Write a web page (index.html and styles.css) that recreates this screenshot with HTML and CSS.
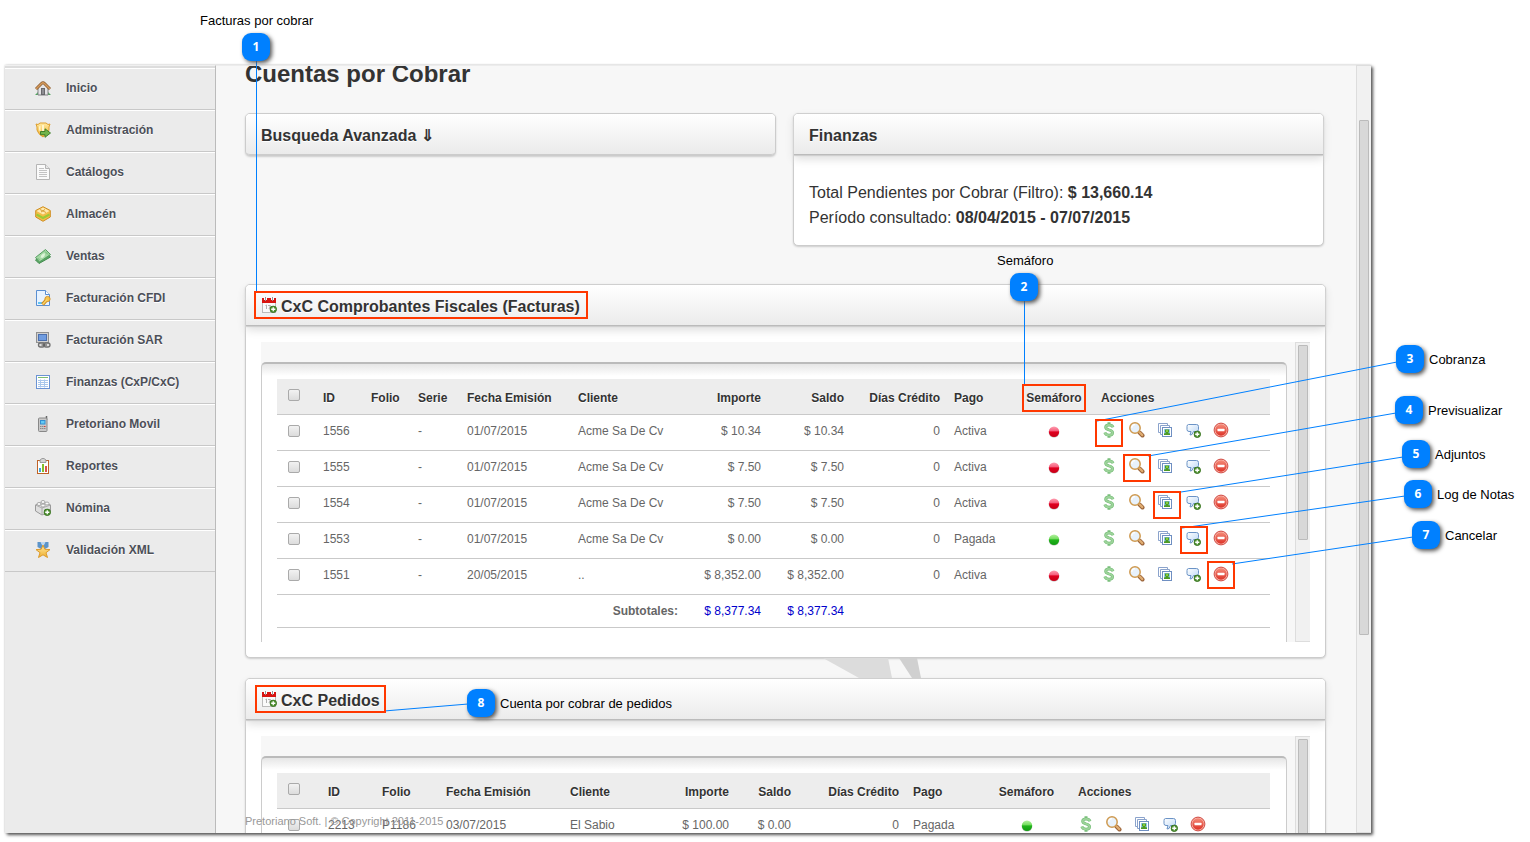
FILE: index.html
```html
<!DOCTYPE html>
<html lang="es">
<head>
<meta charset="utf-8">
<title>Cuentas por Cobrar</title>
<link rel="stylesheet" href="styles.css">
</head>
<body>
<svg class="sprite" aria-hidden="true">
  <defs>
    <linearGradient id="g-gold" x1="0" y1="0" x2="0" y2="1"><stop offset="0" stop-color="#ffe9a0"/><stop offset="1" stop-color="#efb02e"/></linearGradient>
    <linearGradient id="g-blue" x1="0" y1="0" x2="1" y2="1"><stop offset="0" stop-color="#ffffff"/><stop offset="1" stop-color="#b9d6f5"/></linearGradient>
    <linearGradient id="g-stop" x1="0" y1="0" x2="0" y2="1"><stop offset="0" stop-color="#f58a78"/><stop offset="1" stop-color="#dd3328"/></linearGradient>
    <linearGradient id="g-ballred" x1="0" y1="0" x2="0" y2="1"><stop offset="0" stop-color="#ff9db0"/><stop offset=".45" stop-color="#f45a78"/><stop offset=".5" stop-color="#e00020"/><stop offset="1" stop-color="#c80018"/></linearGradient>
    <linearGradient id="g-ballgreen" x1="0" y1="0" x2="0" y2="1"><stop offset="0" stop-color="#b4f0a0"/><stop offset=".45" stop-color="#6fdc5a"/><stop offset=".5" stop-color="#22b41c"/><stop offset="1" stop-color="#109c10"/></linearGradient>
  </defs>
  <symbol id="dollar" viewBox="0 0 16 16">
    <path d="M12 5.2C11.300 3.400 9.900 2.900 8 2.900C5.900 2.900 4.700 3.800 4.700 5.300C4.700 7 6.200 7.400 8 7.900C10 8.400 11.500 8.900 11.500 10.700C11.500 12.300 10 13.200 8 13.200C5.900 13.200 4.500 12.500 3.800 10.600M8 .3V3M8 13V15.800" fill="none" stroke="#78be7a" stroke-width="3"/>
    <path d="M12 5.2C11.300 3.400 9.900 2.900 8 2.900C5.900 2.900 4.700 3.800 4.700 5.300C4.700 7 6.200 7.400 8 7.900C10 8.400 11.500 8.900 11.500 10.700C11.500 12.300 10 13.200 8 13.200C5.900 13.200 4.500 12.500 3.800 10.600" fill="none" stroke="#9ed49b" stroke-width="1.600"/>
  </symbol>
  <symbol id="lens" viewBox="0 0 16 16">
    <path d="M10.500 10.500L13.500 13.500" stroke="#9a6238" stroke-width="4" stroke-linecap="round"/>
    <path d="M10.500 10.300L13.300 13.100" stroke="#e0ae72" stroke-width="2.200" stroke-linecap="round"/>
    <circle cx="6" cy="6" r="5.200" fill="#e8f2fc" stroke="#cf9a50" stroke-width="1.500"/>
    <path d="M2.800 6A3.300 3.300 0 0 1 6 2.700" stroke="#fff" fill="none" stroke-width="1.300"/>
  </symbol>
  <symbol id="images" viewBox="0 0 16 16">
    <path d="M1.500 10.500V1.500H10.500V3M3.500 12.500V3.500H12.500V5M1.500 10.500H3M3.500 12.500H5" fill="none" stroke="#8ba3cc"/>
    <rect x="5.500" y="5.500" width="9" height="9" fill="#fff" stroke="#6f8fc2"/>
    <rect x="7" y="7" width="6" height="6" fill="#8fc8ee"/>
    <path d="M7 13V11.500L9 11V10.500H8V7.500H12V10.500H11V11L13 11.500V13Z" fill="#4c9a25"/>
    <path d="M9 8H11V10H9Z" fill="#86cc3c"/>
  </symbol>
  <symbol id="plus" viewBox="0 0 8 8">
    <circle cx="4" cy="4" r="3.500" fill="#4e9030" stroke="#3b7522"/>
    <path d="M4 1.800V6.200M1.800 4H6.200" stroke="#fff" stroke-width="1.400"/>
  </symbol>
  <symbol id="note" viewBox="0 0 16 16">
    <path d="M3.500 2.500H11.500Q13.500 2.500 13.500 4.500V7.500Q13.500 9.500 11.500 9.500H8.500L7 12.500L5 13L6 9.500H4Q2 9.500 2 7.500V4.500Q2 2.500 3.500 2.500Z" fill="url(#g-blue)" stroke="#6b93c6"/>
    <use href="#plus" x="8.500" y="8.500" width="7.500" height="7.500"/>
  </symbol>
  <symbol id="stop" viewBox="0 0 16 16">
    <circle cx="8" cy="8" r="6.900" fill="#f7b6aa" stroke="#cc3b34" stroke-width=".9"/>
    <circle cx="8" cy="8" r="5.700" fill="url(#g-stop)"/>
    <rect x="4.500" y="6.700" width="7" height="2.500" rx=".5" fill="#fff"/>
  </symbol>
  <symbol id="ball-red" viewBox="0 0 12 12"><ellipse cx="6" cy="6.800" rx="5.300" ry="5" fill="#c9c9c9"/><circle cx="6" cy="5.700" r="5.200" fill="url(#g-ballred)"/></symbol>
  <symbol id="ball-green" viewBox="0 0 12 12"><ellipse cx="6" cy="6.800" rx="5.300" ry="5" fill="#c9c9c9"/><circle cx="6" cy="5.700" r="5.200" fill="url(#g-ballgreen)"/></symbol>
  <symbol id="calendar" viewBox="0 0 16 16">
    <rect x="1.500" y="5.500" width="13" height="10" fill="#fafafa" stroke="#bbb"/>
    <rect x="1" y="1" width="14" height="5" fill="#d81410"/>
    <path d="M3 0H6V3H3ZM10 0H13V3H10Z" fill="#fff"/><path d="M4.500 0V4M11.500 0V4" stroke="#999"/>
    <path d="M4.500 8.500L5.500 8V12M7 8.500H9.500L8 12" fill="none" stroke="#b0b0b0"/>
    <use href="#plus" x="8.500" y="8.500" width="7.500" height="7.500"/>
  </symbol>
  <symbol id="home" viewBox="0 0 16 16">
    <path d="M0 15H6V12H3ZM10 15H16L13 12H10Z" fill="#4da55c"/>
    <path d="M3 8L8 3L13 8V15H3Z" fill="#e4e4e6" stroke="#828286"/>
    <rect x="6.500" y="8.500" width="3" height="6" fill="#8d8d92" stroke="#68686c"/>
    <path d="M1 9L6.500 3.500Q8 2 9.500 3.500L15 9" fill="none" stroke="#8a5a2e" stroke-width="3"/>
    <path d="M1 9L6.500 3.500Q8 2 9.500 3.500L15 9" fill="none" stroke="#d59b5d" stroke-width="1.500"/>
  </symbol>
  <symbol id="shield" viewBox="0 0 16 16">
    <path d="M1 2L3 2.500L5 1H11L13 2.500L15 2L14 5V8Q13 12 8 15Q3 12 2 8V5Z" fill="url(#g-gold)" stroke="#dd9f2f"/>
    <path d="M4 4.500L5.500 3.500V10Q4 8.500 4 7ZM7 3H9V12L8 12.500L7 12Z" fill="#fff4c9"/>
    <path d="M5.500 9.500H10V6.800L15.500 11L10 15.300V12.700H5.500Z" fill="#71b44b" stroke="#42802c"/>
  </symbol>
  <symbol id="page" viewBox="0 0 16 16">
    <path d="M1.500.5H10.500L14.500 4.500V15.500H1.500Z" fill="#fafafa" stroke="#b5b5b5"/><path d="M10.500.5V4.500H14.500" fill="#e6e6e6" stroke="#b5b5b5"/>
    <path d="M4 4.500H9M4 6.500H12M4 8.500H12M4 10.500H12M4 12.500H12" stroke="#c3c3c3"/>
  </symbol>
  <symbol id="box" viewBox="0 0 16 16">
    <path d="M.7 4.500L8 .7L15.300 4.500V11L8 15.300L.7 11Z" fill="#f2bd48" stroke="#d08e22"/>
    <path d="M1.500 5L8 1.500L14.500 5L8 8.500Z" fill="#ffeab0"/><path d="M1.500 8.500L8 12L14.500 8.500" fill="none" stroke="#9ccb35" stroke-width="2"/>
    <path d="M5 3.500L11 6.500M10 3.500L6 6" stroke="#d9a03a"/>
  </symbol>
  <symbol id="money" viewBox="0 0 16 16">
    <path d="M.5 12L11 4L15.500 9L4 15.500Z" fill="#5ca966" stroke="#438b4e"/>
    <path d="M.5 9.500L10.500 1.500L15.500 6.500L4.500 14Z" fill="#a4d8a4" stroke="#549d60"/>
    <path d="M5.500 9.500Q6 6 9.500 5Q11 8 7.500 10Z" fill="#dcf3d8"/><path d="M2.500 10L5 12.500M10 3.500L13 6.500" stroke="#6fb576"/>
  </symbol>
  <symbol id="pagekey" viewBox="0 0 16 16">
    <path d="M1.500.5H10.500L14.500 4.500V15.500H1.500Z" fill="#e8f3ff" stroke="#5a8fd2"/><path d="M10.500.5V4.500H14.500" fill="#fff" stroke="#5a8fd2"/><path d="M3 12H8V14H3Z" fill="#62c3f2"/>
    <path d="M7.500 14.500L12 9.500" stroke="#cf8c20" stroke-width="3.500"/><circle cx="12.500" cy="9" r="2.600" fill="#f5c550" stroke="#d5962b"/><path d="M7.800 14.200L12 9.600" stroke="#f9d569" stroke-width="1.500"/>
  </symbol>
  <symbol id="computer" viewBox="0 0 16 16">
    <rect x="1.500" y=".5" width="12" height="10" fill="#d0d0d0" stroke="#909090"/><rect x="3.500" y="2.500" width="8" height="6" fill="#6f9ce0" stroke="#4b6fae"/>
    <path d="M3 12.500H8" stroke="#999" stroke-width="2"/>
    <rect x="3.500" y="11" width="6" height="4" rx="2" fill="#ddd" stroke="#707070" stroke-width="1.300"/><rect x="9" y="11" width="6" height="4" rx="2" fill="#ddd" stroke="#707070" stroke-width="1.300"/><path d="M6.500 13H12" stroke="#444"/>
  </symbol>
  <symbol id="sheet" viewBox="0 0 16 16">
    <rect x="1.500" y="1.500" width="13" height="13" fill="#fff" stroke="#6a93d4"/><path d="M3 3.500H13" stroke="#7dbd72"/>
    <path d="M3 6.500H13M3 8.500H13M3 10.500H13M3 12.500H13M5.500 5.500V13.500M9.500 5.500V13.500" stroke="#a9c7ec"/>
  </symbol>
  <symbol id="phone" viewBox="0 0 16 16">
    <path d="M11.500 0V4" stroke="#666" stroke-width="1.500"/><rect x="3.500" y="2" width="8.500" height="13.500" rx="1" fill="#c9c9c9" stroke="#888"/>
    <rect x="5.500" y="4.500" width="4.500" height="3.500" fill="#62caf5" stroke="#338ed0"/>
    <path d="M5 10.500H6.500M7 10.500H8.500M5 12.500H6.500M7 12.500H8.500M9 12.500H10.500" stroke="#8a8a8a"/><path d="M9 10.500H10.500" stroke="#d33"/>
  </symbol>
  <symbol id="report" viewBox="0 0 16 16">
    <rect x="2.500" y="2.500" width="11" height="13" fill="#fff" stroke="#bf6226"/><path d="M5 4.500V2L7 .5H9L11 2V4.500Z" fill="#d3d3d3" stroke="#8c8c8c" stroke-width=".8"/>
    <path d="M5 10V14" stroke="#40a7dc" stroke-width="2"/><path d="M8 6V14" stroke="#83bd2b" stroke-width="2"/><path d="M11 8V14" stroke="#d9534a" stroke-width="2"/>
  </symbol>
  <symbol id="brick" viewBox="0 0 16 16">
    <path d="M.5 5L7 2.500L15.500 5V11L7 15L.5 11Z" fill="#dedede" stroke="#999"/><path d="M.5 5L7 8L15.500 5M7 8V15" fill="none" stroke="#aaa"/>
    <g fill="#fafafa" stroke="#a7a7a7"><ellipse cx="4" cy="4" rx="2" ry="1.500"/><ellipse cx="8" cy="2" rx="2" ry="1.500"/><ellipse cx="8" cy="5.500" rx="2" ry="1.500"/><ellipse cx="12" cy="3.500" rx="2" ry="1.500"/></g>
    <use href="#plus" x="8.500" y="8.500" width="7.500" height="7.500"/>
  </symbol>
  <symbol id="medal" viewBox="0 0 16 16">
    <path d="M2.500 0H6L8 4L10 0H13.500V5L10 7H6L2.500 5Z" fill="#5c94c9"/><path d="M5.500 0H10.500L8 5Z" fill="#bcd7ef"/>
    <path d="M8 3L9.800 7.300L15 7.600L11 10.700L12.500 15.500L8 12.800L3.500 15.500L5 10.700L1 7.600L6.200 7.300Z" fill="url(#g-gold)" stroke="#dc9a2c"/>
  </symbol>
</svg>

<div class="window">
  <nav class="sidebar">
    <a class="nav-item" href="#"><svg class="icon"><use href="#home"/></svg>Inicio</a>
    <a class="nav-item" href="#"><svg class="icon"><use href="#shield"/></svg>Administración</a>
    <a class="nav-item" href="#"><svg class="icon"><use href="#page"/></svg>Catálogos</a>
    <a class="nav-item" href="#"><svg class="icon"><use href="#box"/></svg>Almacén</a>
    <a class="nav-item" href="#"><svg class="icon"><use href="#money"/></svg>Ventas</a>
    <a class="nav-item" href="#"><svg class="icon"><use href="#pagekey"/></svg>Facturación CFDI</a>
    <a class="nav-item" href="#"><svg class="icon"><use href="#computer"/></svg>Facturación SAR</a>
    <a class="nav-item" href="#"><svg class="icon"><use href="#sheet"/></svg>Finanzas (CxP/CxC)</a>
    <a class="nav-item" href="#"><svg class="icon"><use href="#phone"/></svg>Pretoriano Movil</a>
    <a class="nav-item" href="#"><svg class="icon"><use href="#report"/></svg>Reportes</a>
    <a class="nav-item" href="#"><svg class="icon"><use href="#brick"/></svg>Nómina</a>
    <a class="nav-item" href="#"><svg class="icon"><use href="#medal"/></svg>Validación XML</a>
  </nav>

  <main class="content">
    <h1 class="title">Cuentas por Cobrar</h1>
    <div class="summary">
      <section class="panel">
        <h2 class="panel-head panel-head-closed">Busqueda Avanzada ⇓</h2>
      </section>
      <section class="panel">
        <h2 class="panel-head">Finanzas</h2>
        <div class="totals">
          <div>Total Pendientes por Cobrar (Filtro): <b>$ 13,660.14</b></div>
          <div>Período consultado: <b>08/04/2015 - 07/07/2015</b></div>
        </div>
      </section>
    </div>

    <section class="panel">
      <h2 class="panel-head"><svg class="icon"><use href="#calendar"/></svg>CxC Comprobantes Fiscales (Facturas)</h2>
      <div class="scroller">
        <div class="scroll-view">
          <div class="sheet">
            <table class="grid">
              <colgroup><col class="w39"><col class="w48"><col class="w47"><col class="w49"><col class="w111"><col class="w114"><col class="w83"><col class="w83"><col class="w96"><col class="w74"><col class="w66"><col></colgroup>
              <thead><tr><th class="check"><input type="checkbox" aria-label="Seleccionar todas las facturas"></th><th>ID</th><th>Folio</th><th>Serie</th><th>Fecha Emisión</th><th>Cliente</th><th class="num">Importe</th><th class="num">Saldo</th><th class="num">Días Crédito</th><th>Pago</th><th class="light">Semáforo</th><th class="acts">Acciones</th></tr></thead>
              <tbody>
                <tr><td class="check"><input type="checkbox" aria-label="Factura 1556"></td><td>1556</td><td></td><td>-</td><td>01/07/2015</td><td>Acme Sa De Cv</td><td class="num">$ 10.34</td><td class="num">$ 10.34</td><td class="num">0</td><td>Activa</td><td class="light"><svg class="ball"><use href="#ball-red"/></svg></td><td class="acts"><div class="actions"><button aria-label="Cobranza"><svg class="icon"><use href="#dollar"/></svg></button><button aria-label="Previsualizar"><svg class="icon"><use href="#lens"/></svg></button><button aria-label="Adjuntos"><svg class="icon"><use href="#images"/></svg></button><button aria-label="Log de Notas"><svg class="icon"><use href="#note"/></svg></button><button aria-label="Cancelar"><svg class="icon"><use href="#stop"/></svg></button></div></td></tr>
                <tr><td class="check"><input type="checkbox" aria-label="Factura 1555"></td><td>1555</td><td></td><td>-</td><td>01/07/2015</td><td>Acme Sa De Cv</td><td class="num">$ 7.50</td><td class="num">$ 7.50</td><td class="num">0</td><td>Activa</td><td class="light"><svg class="ball"><use href="#ball-red"/></svg></td><td class="acts"><div class="actions"><button aria-label="Cobranza"><svg class="icon"><use href="#dollar"/></svg></button><button aria-label="Previsualizar"><svg class="icon"><use href="#lens"/></svg></button><button aria-label="Adjuntos"><svg class="icon"><use href="#images"/></svg></button><button aria-label="Log de Notas"><svg class="icon"><use href="#note"/></svg></button><button aria-label="Cancelar"><svg class="icon"><use href="#stop"/></svg></button></div></td></tr>
                <tr><td class="check"><input type="checkbox" aria-label="Factura 1554"></td><td>1554</td><td></td><td>-</td><td>01/07/2015</td><td>Acme Sa De Cv</td><td class="num">$ 7.50</td><td class="num">$ 7.50</td><td class="num">0</td><td>Activa</td><td class="light"><svg class="ball"><use href="#ball-red"/></svg></td><td class="acts"><div class="actions"><button aria-label="Cobranza"><svg class="icon"><use href="#dollar"/></svg></button><button aria-label="Previsualizar"><svg class="icon"><use href="#lens"/></svg></button><button aria-label="Adjuntos"><svg class="icon"><use href="#images"/></svg></button><button aria-label="Log de Notas"><svg class="icon"><use href="#note"/></svg></button><button aria-label="Cancelar"><svg class="icon"><use href="#stop"/></svg></button></div></td></tr>
                <tr><td class="check"><input type="checkbox" aria-label="Factura 1553"></td><td>1553</td><td></td><td>-</td><td>01/07/2015</td><td>Acme Sa De Cv</td><td class="num">$ 0.00</td><td class="num">$ 0.00</td><td class="num">0</td><td>Pagada</td><td class="light"><svg class="ball"><use href="#ball-green"/></svg></td><td class="acts"><div class="actions"><button aria-label="Cobranza"><svg class="icon"><use href="#dollar"/></svg></button><button aria-label="Previsualizar"><svg class="icon"><use href="#lens"/></svg></button><button aria-label="Adjuntos"><svg class="icon"><use href="#images"/></svg></button><button aria-label="Log de Notas"><svg class="icon"><use href="#note"/></svg></button><button aria-label="Cancelar"><svg class="icon"><use href="#stop"/></svg></button></div></td></tr>
                <tr><td class="check"><input type="checkbox" aria-label="Factura 1551"></td><td>1551</td><td></td><td>-</td><td>20/05/2015</td><td>..</td><td class="num">$ 8,352.00</td><td class="num">$ 8,352.00</td><td class="num">0</td><td>Activa</td><td class="light"><svg class="ball"><use href="#ball-red"/></svg></td><td class="acts"><div class="actions"><button aria-label="Cobranza"><svg class="icon"><use href="#dollar"/></svg></button><button aria-label="Previsualizar"><svg class="icon"><use href="#lens"/></svg></button><button aria-label="Adjuntos"><svg class="icon"><use href="#images"/></svg></button><button aria-label="Log de Notas"><svg class="icon"><use href="#note"/></svg></button><button aria-label="Cancelar"><svg class="icon"><use href="#stop"/></svg></button></div></td></tr>
              </tbody>
              <tfoot><tr><td class="num" colspan="6"><b>Subtotales:</b></td><td class="num sum">$ 8,377.34</td><td class="num sum">$ 8,377.34</td><td colspan="4"></td></tr></tfoot>
            </table>
          </div>
        </div>
        <div class="track"><div class="thumb thumb-list"></div></div>
      </div>
    </section>

    <svg class="watermark" viewBox="0 0 98 20" aria-hidden="true"><path d="M0 0H65L69 20H36Z" fill="#dcdcdc"/><path d="M76 0H94L98 20H89Z" fill="#d0d0d0"/></svg>

    <section class="panel">
      <h2 class="panel-head"><svg class="icon"><use href="#calendar"/></svg>CxC Pedidos</h2>
      <div class="scroller">
        <div class="scroll-view">
          <div class="sheet">
            <table class="grid">
              <colgroup><col class="w44"><col class="w54"><col class="w64"><col class="w124"><col class="w111"><col class="w62"><col class="w62"><col class="w108"><col class="w83"><col class="w75"><col></colgroup>
              <thead><tr><th class="check"><input type="checkbox" aria-label="Seleccionar todos los pedidos"></th><th>ID</th><th>Folio</th><th>Fecha Emisión</th><th>Cliente</th><th class="num">Importe</th><th class="num">Saldo</th><th class="num">Días Crédito</th><th>Pago</th><th class="light">Semáforo</th><th class="acts">Acciones</th></tr></thead>
              <tbody>
                <tr><td class="check"><input type="checkbox" aria-label="Pedido 2213"></td><td>2213</td><td>P1186</td><td>03/07/2015</td><td>El Sabio</td><td class="num">$ 100.00</td><td class="num">$ 0.00</td><td class="num">0</td><td>Pagada</td><td class="light"><svg class="ball"><use href="#ball-green"/></svg></td><td class="acts"><div class="actions"><button aria-label="Cobranza"><svg class="icon"><use href="#dollar"/></svg></button><button aria-label="Previsualizar"><svg class="icon"><use href="#lens"/></svg></button><button aria-label="Adjuntos"><svg class="icon"><use href="#images"/></svg></button><button aria-label="Log de Notas"><svg class="icon"><use href="#note"/></svg></button><button aria-label="Cancelar"><svg class="icon"><use href="#stop"/></svg></button></div></td></tr>
              </tbody>
            </table>
          </div>
        </div>
        <div class="track"><div class="thumb thumb-list"></div></div>
      </div>
    </section>
    <footer class="copyright">Pretoriano Soft. | © Copyright 2011-2015</footer>
  </main>
  <div class="track"><div class="thumb thumb-page"></div></div>
</div>

<div class="callouts">
  <svg class="leaders" aria-hidden="true">
    <path d="M256.500 60V292M1024.500 300V386M1397 362L1097 421M1396 413L1148 456M1403 457L1181 492M1405 496L1182 528M1413 537L1232 564M468 704L384 711"/>
  </svg>
  <span class="mark m1"></span><span class="mark m2"></span><span class="mark m3"></span><span class="mark m4"></span>
  <span class="mark m5"></span><span class="mark m6"></span><span class="mark m7"></span><span class="mark m8"></span>
  <span class="badge b1">1</span><span class="badge b2">2</span><span class="badge b3">3</span><span class="badge b4">4</span>
  <span class="badge b5">5</span><span class="badge b6">6</span><span class="badge b7">7</span><span class="badge b8">8</span>
  <span class="label l1">Facturas por cobrar</span><span class="label l2">Semáforo</span><span class="label l3">Cobranza</span><span class="label l4">Previsualizar</span>
  <span class="label l5">Adjuntos</span><span class="label l6">Log de Notas</span><span class="label l7">Cancelar</span><span class="label l8">Cuenta por cobrar de pedidos</span>
</div>
</body>
</html>
```
FILE: styles.css
```css
* { box-sizing: border-box; }
body {
  margin: 0;
  height: 100vh;
  padding: 65px 159px 9px 5px;
  position: relative;
  overflow: hidden;
  background: #fff;
  color: #333;
  font: 12px/16px "Liberation Sans", Arial, sans-serif;
}
.sprite { position: absolute; width: 0; height: 0; }
.icon { display: block; width: 16px; height: 16px; flex: none; }

/* Application window */
.window {
  display: flex;
  height: 100%;
  overflow: hidden;
  background: #f7f7f7;
  box-shadow: 2px 2px 3px #555, 0 0 2px #ccc;
}
.sidebar {
  flex: 0 0 211px;
  padding-top: 2px;
  background: #ebebeb;
  border-right: 1px solid #bbb;
  border-top: 1px solid #f0f0f0;
  box-shadow: inset 0 2px 0 #ddd;
}
.nav-item {
  display: flex;
  align-items: center;
  gap: 15px;
  height: 42px;
  padding: 0 0 2px 30px;
  border-top: 1px solid #fff;
  border-bottom: 1px solid #c8c8c8;
  color: #4c4f58;
  font-weight: bold;
  text-decoration: none;
  text-shadow: 0 1px 0 #fff;
}

.content {
  flex: 1;
  min-width: 0;
  padding: 0 30px 0 29px;
  position: relative;
  overflow: hidden;
  border-top: 1px solid #ececec;
}
.title { margin: 0 0 31px; font-size: 24px; line-height: 16px; }
.summary {
  display: grid;
  grid-template-columns: 1fr 1fr;
  align-items: start;
  gap: 17px;
  margin: 0 2px 38px 0;
}

/* Panels */
.panel {
  background: #fff;
  border: 1px solid #ccc;
  border-radius: 5px;
  box-shadow: 0 1px 2px #ccc;
}
.panel-head {
  display: flex;
  align-items: center;
  gap: 4px;
  height: 41px;
  margin: 0;
  padding: 3px 15px 0;
  border-bottom: 1px solid #bbb;
  border-radius: 4px 4px 0 0;
  background: linear-gradient(#fff, #ebebeb);
  box-shadow: 0 1px 1px #ccc, 0 4px 10px #ddd;
  font-size: 16px;
  line-height: 20px;
  text-shadow: 0 1px 0 #fff;
}
.panel-head .icon { margin-bottom: 4px; }
.panel-head-closed { border-radius: 4px; box-shadow: none; border-bottom-color: #ccc; }
.totals { padding: 25px 15px 15px; font-size: 16px; line-height: 25px; }

/* Scrolling lists */
.scroller { display: flex; height: 300px; margin: 16px 15px 15px; }
.scroll-view {
  flex: 1;
  min-width: 0;
  padding: 20px 8px 0 0;
  overflow: hidden;
  background: #f7f7f7;
}
.sheet {
  height: 400px;
  padding: 15px 16px 0 15px;
  border: 1px solid #ccc;
  border-top: 2px solid #bbb;
  border-radius: 5px 5px 0 0;
  background: linear-gradient(#e6e6e6, #fff 12px);
}
.track {
  flex: 0 0 15px;
  padding: 2px 2px 0;
  background: #f1f1f1;
  border: 1px solid #ddd;
  border-right: 0;
}
.thumb { background: #d8d8d8; border: 1px solid #bbb; border-radius: 1px; }
.thumb-list { height: 195px; }
.thumb-page { height: 515px; margin-top: 52px; }

/* Tables */
.grid { width: 100%; table-layout: fixed; border-collapse: separate; border-spacing: 0; }
.grid th, .grid td {
  height: 36px;
  padding: 0 7px;
  border-bottom: 1px solid #c9c9c9;
  text-align: left;
  white-space: nowrap;
}
.grid th { padding-top: 2px; background: #ededed; text-shadow: 0 1px 0 #fff; }
.grid td { padding-bottom: 4px; color: #666; }
.grid tfoot td { height: 33px; padding-bottom: 0; }
.grid .num { text-align: right; }
.grid .sum { color: #00c; }
.grid .check { padding: 0 0 4px 11px; }
.grid .light { padding-left: 0; padding-right: 0; text-align: center; }
.grid td.light { padding-bottom: 1px; }
.grid .acts { padding-left: 14px; padding-right: 0; }
.grid td.acts { padding-bottom: 6px; }
.check input {
  appearance: none;
  display: block;
  width: 12px;
  height: 12px;
  margin: 0;
  border: 1px solid #aaa;
  border-radius: 2px;
  background: linear-gradient(#f2f2f2, #dcdcdc);
}
.ball { display: block; width: 12px; height: 12px; margin: 0 auto; }
.actions { display: flex; gap: 12px; }
.actions button { padding: 0; border: 0; background: none; }
.w39 { width: 39px; } .w44 { width: 44px; } .w47 { width: 47px; }
.w48 { width: 48px; } .w49 { width: 49px; } .w54 { width: 54px; }
.w62 { width: 62px; } .w64 { width: 64px; } .w66 { width: 66px; }
.w74 { width: 74px; } .w75 { width: 75px; } .w83 { width: 83px; }
.w96 { width: 96px; } .w108 { width: 108px; } .w111 { width: 111px; }
.w114 { width: 114px; } .w124 { width: 124px; }

.watermark { display: block; width: 98px; height: 20px; margin-left: 578px; }
.copyright {
  position: absolute;
  left: 29px;
  bottom: 4px;
  color: #999;
  font-size: 11px;
}

/* Numbered annotations over the window */
.callouts, .leaders { position: absolute; inset: 0; width: 100%; height: 100%; pointer-events: none; }
.leaders path { fill: none; stroke: #0080ff; stroke-width: 1; }
.mark { position: absolute; width: 28px; height: 28px; border: 2px solid #ff3800; }
.badge {
  position: absolute;
  width: 28px;
  height: 28px;
  border-radius: 9px;
  background: #0080ff;
  box-shadow: 2px 2px 4px #555;
  color: #fff;
  font: bold 12px/28px "Open Sans", sans-serif;
  text-align: center;
}
.label { position: absolute; color: #000; font-size: 13px; white-space: nowrap; }
.m1 { left: 254px; top: 291px; width: 334px; }
.m2 { left: 1022px; top: 384px; width: 64px; }
.m3 { left: 1095px; top: 419px; }
.m4 { left: 1123px; top: 454px; }
.m5 { left: 1153px; top: 491px; }
.m6 { left: 1180px; top: 526px; }
.m7 { left: 1207px; top: 561px; }
.m8 { left: 255px; top: 685px; width: 131px; }
.b1 { left: 242px; top: 33px; }
.b2 { left: 1010px; top: 273px; }
.b3 { left: 1396px; top: 345px; }
.b4 { left: 1395px; top: 396px; }
.b5 { left: 1402px; top: 440px; }
.b6 { left: 1404px; top: 480px; }
.b7 { left: 1412px; top: 521px; }
.b8 { left: 467px; top: 689px; }
.l1 { left: 200px; top: 13px; }
.l2 { left: 997px; top: 253px; }
.l3 { left: 1429px; top: 352px; }
.l4 { left: 1428px; top: 403px; }
.l5 { left: 1435px; top: 447px; }
.l6 { left: 1437px; top: 487px; }
.l7 { left: 1445px; top: 528px; }
.l8 { left: 500px; top: 696px; }
```
